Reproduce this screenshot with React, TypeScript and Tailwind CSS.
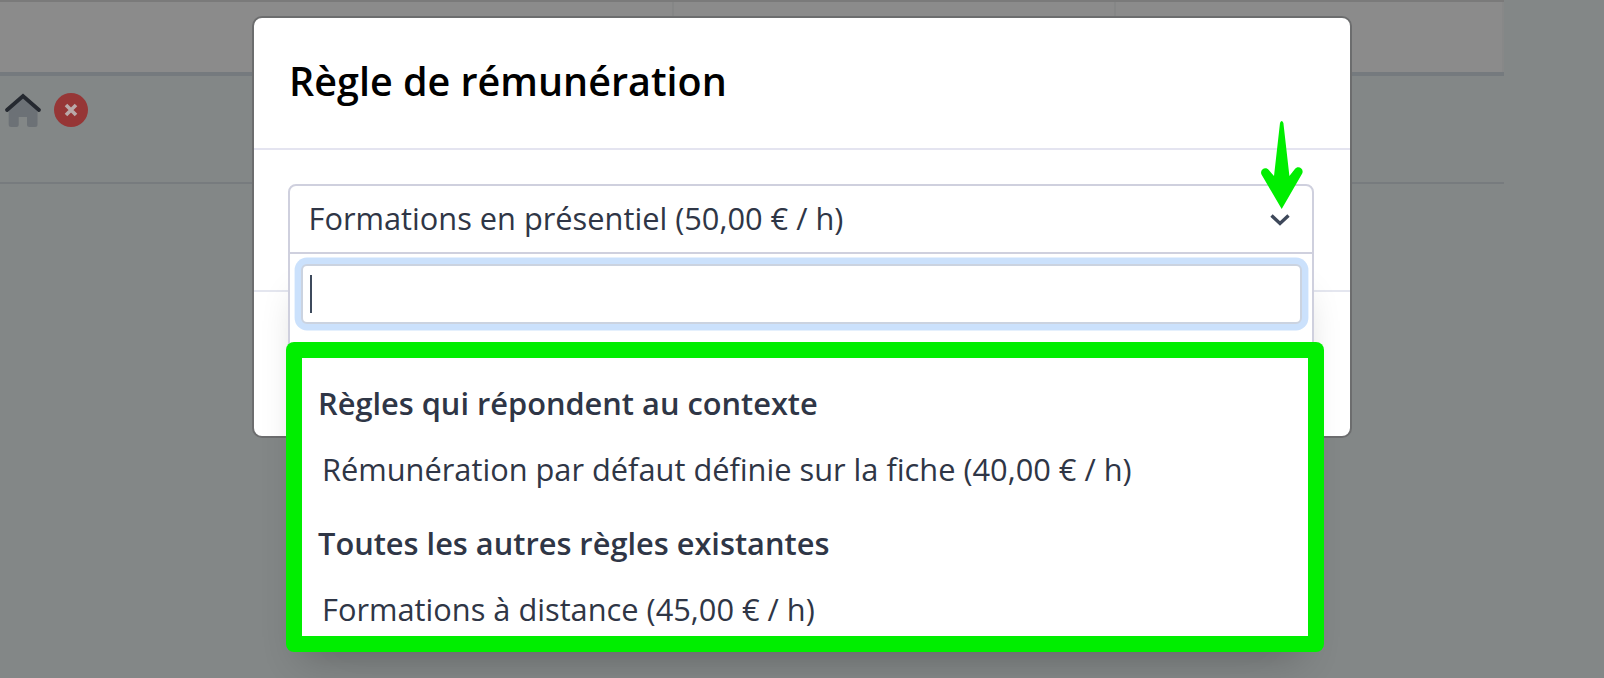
const groups = [
  {
    label: "Règles qui répondent au contexte",
    options: ["Rémunération par défaut définie sur la fiche (40,00 € / h)"],
  },
  {
    label: "Toutes les autres règles existantes",
    options: ["Formations à distance (45,00 € / h)"],
  },
];

function HomeIcon() {
  return (
    <svg width="38" height="34" viewBox="0 0 38 34" fill="none">
      <path d="M4.700 17 19 5l14.500 12v14.500a2.500 2.500 0 0 1-2.500 2.500h-5.500a2.500 2.500 0 0 1-2.500-2.500V24h-8.300v7.500a2.500 2.500 0 0 1-2.500 2.500H7.200a2.500 2.500 0 0 1-2.500-2.500z" fill="#6c7176" />
      <path d="M3 17 19 3l16 14" stroke="#252930" strokeWidth="3.800" strokeLinecap="round" />
    </svg>
  );
}

function RemoveIcon() {
  return (
    <svg width="34" height="34" viewBox="0 0 34 34">
      <circle cx="17" cy="17" r="17" fill="#963636" />
      <path d="m12 12 10 10m0-10L12 22" stroke="#b9a9a9" strokeWidth="3.600" />
    </svg>
  );
}

/* Dimmed page behind the modal */
function Backdrop() {
  return (
    <div className="h-full bg-[#838787]">
      <div className="w-[1504px]">
        <div className="flex h-[76px] border-t-2 border-b-4 border-t-[#7a7a7a] border-b-[#757a7e] bg-[#8b8b8b]">
          <div className="w-[674px] border-r-2 border-[#858686]" />
          <div className="w-[442px] border-r-2 border-[#858686]" />
          <div className="flex-1 border-r-2 border-[#878888]" />
        </div>
        <div className="flex h-[108px] items-start gap-3 border-b-2 border-[#777b7e] pt-[16.500px] pl-[3.500px]">
          <HomeIcon />
          <RemoveIcon />
        </div>
      </div>
    </div>
  );
}

function Dropdown() {
  return (
    <div className="absolute top-[66px] -left-[2px] w-[1026px]">
      <div className="h-[386px] border-2 border-[#cfd0de] bg-white pt-[10px] pr-[10px] pl-[11px] shadow-[0_34px_36px_-12px_rgba(0,0,0,0.2),0_60px_36px_-50px_rgba(0,0,0,0.05)]">
        <div className="flex h-[60px] items-center rounded-[6px] border-2 border-[#cbd3e0] bg-white pl-[7px] shadow-[0_0_0_6.400px_#cbe1fc]">
          <span className="h-[38px] w-[2px] bg-[#3e4a5c]" />
        </div>
      </div>
      {/* Highlight frame */}
      <div className="absolute top-[90px] -left-[2px] h-[310px] w-[1038px] rounded-[8px] bg-[#00ee00] p-4">
        <div className="h-full bg-white pt-[18px] text-[#2f3646]">
          {groups.map((group) => (
            <div key={group.label} className="h-[140px]">
              <p className="pl-4 text-[30.770px] leading-[54px] font-semibold">{group.label}</p>
              {group.options.map((option) => (
                <p key={option} className="pl-5 text-[30.770px] leading-[78px]">
                  {option}
                </p>
              ))}
            </div>
          ))}
        </div>
      </div>
    </div>
  );
}

export default function App() {
  return (
    <div className="relative h-[678px] w-[1604px] overflow-hidden font-['Open_Sans',sans-serif]">
      <Backdrop />
      <div className="absolute top-4 left-[252px] h-[422px] w-[1100px] rounded-[10px] border-2 border-[#6c6d6e] bg-white">
        <div className="flex h-[132px] items-center border-b-2 border-[#e4e4f0] pb-[5px] pl-[35px]">
          <h1 className="text-[39.500px] leading-[52px] font-semibold text-black">Règle de rémunération</h1>
        </div>
        <div className="h-[142px] border-b-2 border-[#e4e6ef] pt-[34px] pr-9 pl-[34px]">
          <div className="relative h-[70px] rounded-t-[8px] border-2 border-[#cfd0de] bg-white">
            <div className="flex h-[66px] items-center justify-between pr-[21px] pl-[18.500px] text-[30.770px] text-[#2f3646]">
              <span className="pb-[2px]">Formations en présentiel (50,00 € / h)</span>
              <svg className="mt-[2px]" width="22" height="14" viewBox="0 0 22 14" fill="none">
                <path d="m2.500 2.500 8.500 8 8.500-8" stroke="#3e485a" strokeWidth="3.400" />
              </svg>
            </div>
            <Dropdown />
          </div>
        </div>
      </div>
      {/* Arrow pointing at the chevron */}
      <svg className="absolute top-[120px] left-[1260px]" width="44" height="90" viewBox="0 0 44 90">
        <path d="M20 3q1.700-4 3.400 0l6 53 5.500-7c3-4 9.500-.500 7.300 4.500L21.700 89 1.500 54.500c-2.200-5 4.300-8.500 7.300-4.500l5.200 6z" fill="#00ee00" />
      </svg>
    </div>
  );
}
